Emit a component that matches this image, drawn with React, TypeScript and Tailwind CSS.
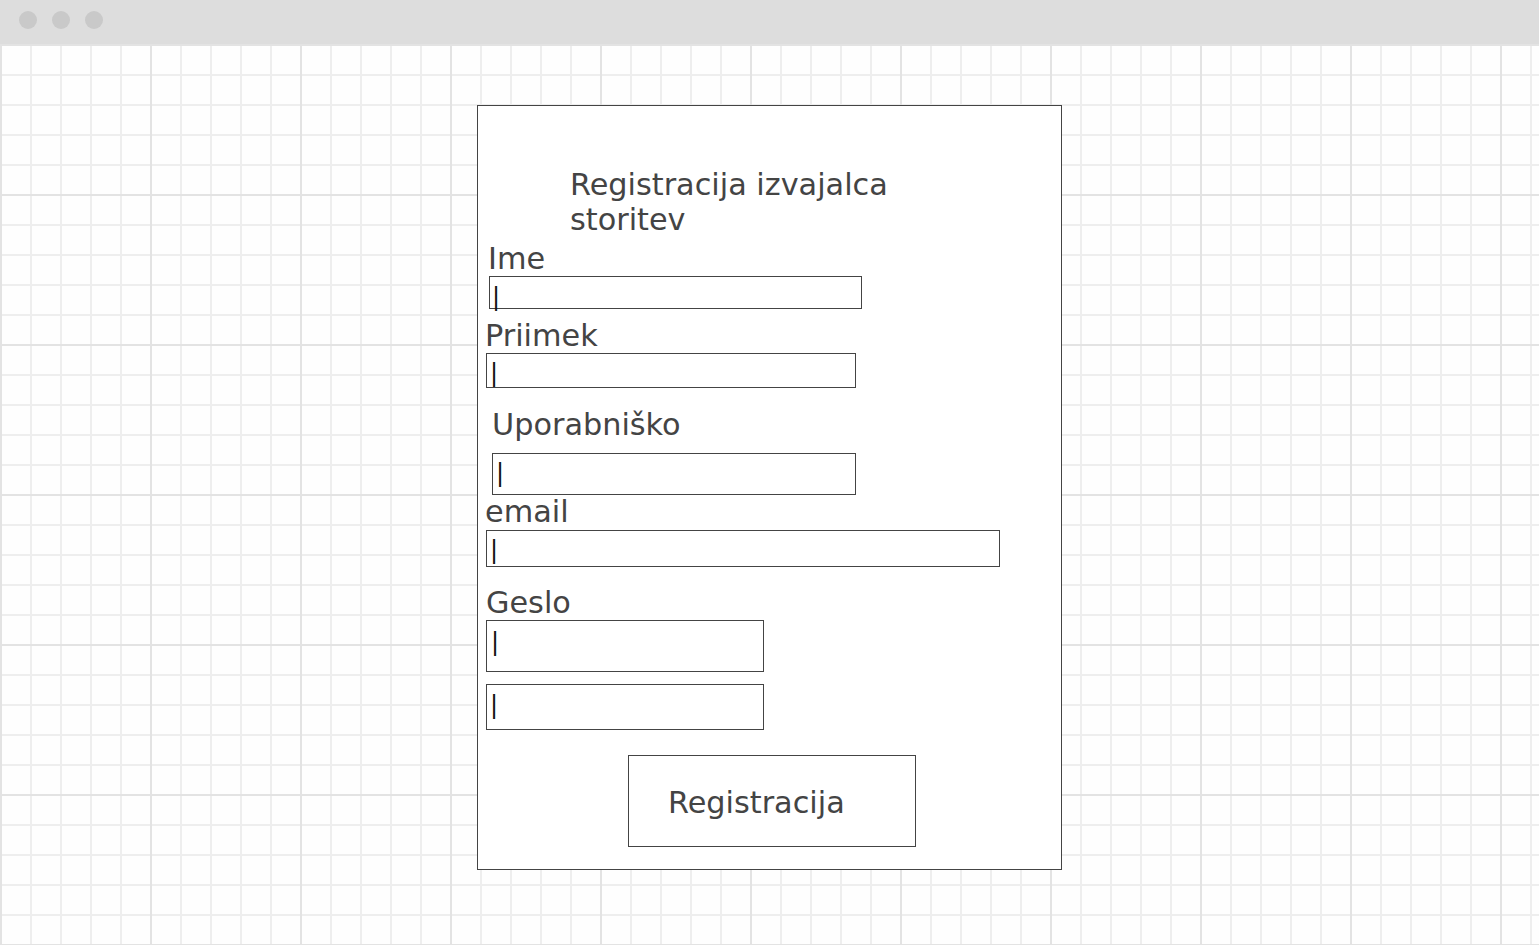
const fieldLabel = "block text-[30.3px] leading-[35px] text-[#444444] whitespace-nowrap";
const fieldBox = "border border-[#444444] bg-white";
const caret = "block text-[24px] leading-[24px] text-[#111111]";

function Field({
  box,
  caretPos,
}: {
  box: string;
  caretPos: string;
}) {
  return (
    <div className={`${fieldBox} ${box}`}>
      <span className={`${caret} ${caretPos}`}>|</span>
    </div>
  );
}

export default function App() {
  return (
    <div className="flex h-[945px] w-full flex-col overflow-hidden bg-white font-['DejaVu_Sans',sans-serif]">
      {/* window chrome */}
      <div className="flex h-[44px] shrink-0 items-start gap-[15px] bg-[#dddddd] pl-[19px] pt-[11px]">
        <span className="h-[18px] w-[18px] rounded-full bg-[#c9c9c9]" />
        <span className="h-[18px] w-[18px] rounded-full bg-[#c9c9c9]" />
        <span className="h-[18px] w-[18px] rounded-full bg-[#c9c9c9]" />
      </div>

      {/* grid canvas */}
      <div className="flex-1 bg-[#fefefe] bg-[linear-gradient(to_right,#e3e3e3_2px,transparent_2px),linear-gradient(to_bottom,#e3e3e3_2px,transparent_2px),linear-gradient(to_right,#eeeeee_2px,transparent_2px),linear-gradient(to_bottom,#eeeeee_2px,transparent_2px)] bg-size-[150px_150px,150px_150px,30px_30px,30px_30px]">
        <div className="ml-[477px] mt-[61px] flex h-[765px] w-[585px] flex-col border border-[#444444] bg-white">
          <h1 className="ml-[92px] mt-[61px] w-[360px] text-[30.3px] font-normal leading-[35px] text-[#444444]">
            Registracija izvajalca storitev
          </h1>

          <label className={`${fieldLabel} ml-[10px] mt-[4px]`}>Ime</label>
          <Field box="ml-[11px] h-[33px] w-[373px]" caretPos="ml-[2px] mt-[8px]" />

          <label className={`${fieldLabel} ml-[7px] mt-[9px]`}>Priimek</label>
          <Field box="ml-[8px] h-[35px] w-[370px]" caretPos="ml-[3px] mt-[7px]" />

          <label className={`${fieldLabel} ml-[14px] mt-[19px]`}>Uporabniško</label>
          <Field box="ml-[14px] mt-[11px] h-[42px] w-[364px]" caretPos="ml-[3px] mt-[7px]" />

          <label className={`${fieldLabel} ml-[7px] -mt-px`}>email</label>
          <Field box="ml-[8px] mt-px h-[37px] w-[514px]" caretPos="ml-[3px] mt-[7px]" />

          <label className={`${fieldLabel} ml-[8px] mt-[18px]`}>Geslo</label>
          <Field box="ml-[8px] h-[52px] w-[278px]" caretPos="ml-[4px] mt-[9px]" />
          <Field box="ml-[8px] mt-[12px] h-[46px] w-[278px]" caretPos="ml-[3px] mt-[8px]" />

          <div
            role="button"
            className="ml-[150px] mt-[25px] h-[92px] w-[288px] border border-[#444444] bg-white pl-[39px] pt-[29px]"
          >
            <span className="block text-[30.3px] leading-[35px] text-[#444444]">Registracija</span>
          </div>
        </div>
      </div>
    </div>
  );
}
